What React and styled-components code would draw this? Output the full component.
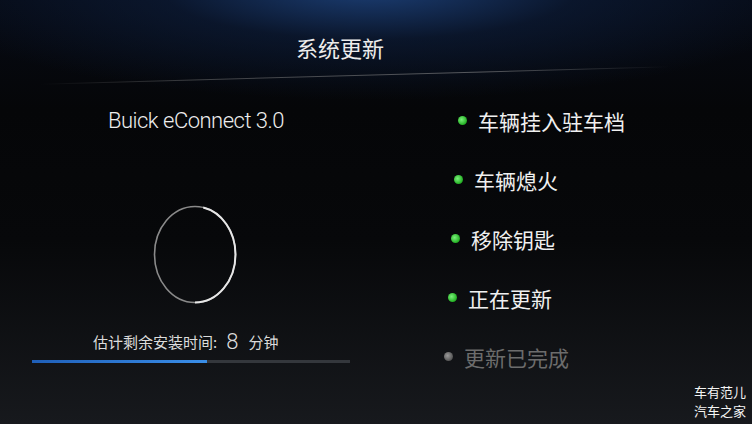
import React from 'react'
import styled, { createGlobalStyle } from 'styled-components'

const GlobalStyle = createGlobalStyle`
  html, body {
    margin: 0;
    padding: 0;
    background: #050608;
  }
  body {
    font-family: Roboto, "Noto Sans CJK SC", sans-serif;
  }
`

const Screen = styled.div`
  position: relative;
  width: 752px;
  height: 424px;
  overflow: hidden;
  display: flex;
  flex-direction: column;
  color: #e6e6e6;
  background:
    radial-gradient(ellipse 460px 110px at 370px -10px, rgba(28, 64, 120, 0.95), rgba(14, 32, 64, 0.55) 45%, rgba(5, 6, 10, 0) 100%),
    linear-gradient(180deg, #060a14 0px, #050608 110px, #07080a 240px, #17191d 424px);
`

const Header = styled.div`
  height: 75px;
  box-sizing: border-box;
  padding: 34px 0 0 296px;
`

const Title = styled.h1`
  margin: 0;
  font-family: "Noto Sans CJK SC", sans-serif;
  font-weight: 400;
  font-size: 22px;
  line-height: 26px;
  color: #ececec;
`

const Rule = styled.div`
  width: 630px;
  height: 1px;
  margin-left: 40px;
  transform: rotate(-1.6deg);
  background: linear-gradient(90deg, rgba(120, 120, 120, 0), rgba(130, 130, 130, 0.45) 25%, rgba(150, 150, 150, 0.55) 70%, rgba(120, 120, 120, 0));
`

const Main = styled.div`
  flex: 1;
  display: grid;
  grid-template-columns: 400px 1fr;
  margin-top: -3px;
`

const Left = styled.div`
  display: flex;
  flex-direction: column;
  align-items: flex-start;
`

const Product = styled.div`
  margin: 35px 0 0 108px;
  font-family: Roboto, sans-serif;
  font-weight: 300;
  font-size: 22px;
  letter-spacing: -0.5px;
  line-height: 26px;
  color: #ededed;
`

const Ring = styled.svg`
  display: block;
  margin: 71px 0 0 153px;
`

const Eta = styled.div`
  margin: 27px 0 0 93px;
  font-family: "Noto Sans CJK SC", sans-serif;
  font-size: 15px;
  line-height: 22px;
  color: #dcdcdc;
  display: flex;
  align-items: center;
`

const Minutes = styled.span`
  font-family: Roboto, sans-serif;
  font-weight: 300;
  font-size: 22px;
  margin: 0 10px 0 9px;
`

const Track = styled.div`
  margin: 7px 0 0 32px;
  width: 318px;
  height: 3px;
  background: #34373c;
`

const Fill = styled.div`
  height: 100%;
  background: linear-gradient(90deg, #1f5fb8, #3a8ee8);
`

const Steps = styled.ul`
  list-style: none;
  margin: 0;
  padding: 18px 0 0 0;
`

const Step = styled.li`
  height: 59px;
  display: flex;
  align-items: center;
  padding-left: ${p => p.$indent}px;
  font-family: "Noto Sans CJK SC", sans-serif;
  font-size: 21px;
  color: ${p => (p.$done ? '#f0f0f0' : '#6c6c6c')};
`

const Dot = styled.span`
  width: 9px;
  height: 9px;
  border-radius: 50%;
  margin-right: 11px;
  flex: none;
  background: ${p =>
    p.$done
      ? 'radial-gradient(circle at 40% 40%, #7bf07b, #22b022 70%)'
      : 'radial-gradient(circle at 40% 40%, #9a9a9a, #555 70%)'};
`

const Watermark = styled.div`
  position: absolute;
  right: 6px;
  bottom: 4px;
  font-family: "Noto Sans CJK SC", sans-serif;
  font-size: 13px;
  line-height: 19px;
  color: #f4f4f4;
`

const steps = [
  { label: '车辆挂入驻车档', indent: 58, done: true },
  { label: '车辆熄火', indent: 54, done: true },
  { label: '移除钥匙', indent: 51, done: true },
  { label: '正在更新', indent: 48, done: true },
  { label: '更新已完成', indent: 44, done: false },
]

const Spinner = () => (
  <Ring width="84" height="99" viewBox="0 0 84 99">
    <ellipse cx="42" cy="49.5" rx="40.5" ry="48" fill="none" stroke="#8a8a8a" strokeWidth="1.6" />
    <ellipse
      cx="42"
      cy="49.5"
      rx="40.5"
      ry="48"
      fill="none"
      stroke="#e6e6e6"
      strokeWidth="2"
      pathLength="100"
      strokeDasharray="25 53 22 100"
    />
  </Ring>
)

export default function App() {
  return (
    <>
      <GlobalStyle />
      <Screen>
        <Header>
          <Title>系统更新</Title>
        </Header>
        <Rule />
        <Main>
          <Left>
            <Product>Buick eConnect 3.0</Product>
            <Spinner />
            <Eta>
              估计剩余安装时间:
              <Minutes>8</Minutes>
              分钟
            </Eta>
            <Track>
              <Fill style={{ width: '55%' }} />
            </Track>
          </Left>
          <Steps>
            {steps.map(s => (
              <Step key={s.label} $indent={s.indent} $done={s.done}>
                <Dot $done={s.done} />
                {s.label}
              </Step>
            ))}
          </Steps>
        </Main>
        <Watermark>
          车有范儿
          <br />
          汽车之家
        </Watermark>
      </Screen>
    </>
  )
}
